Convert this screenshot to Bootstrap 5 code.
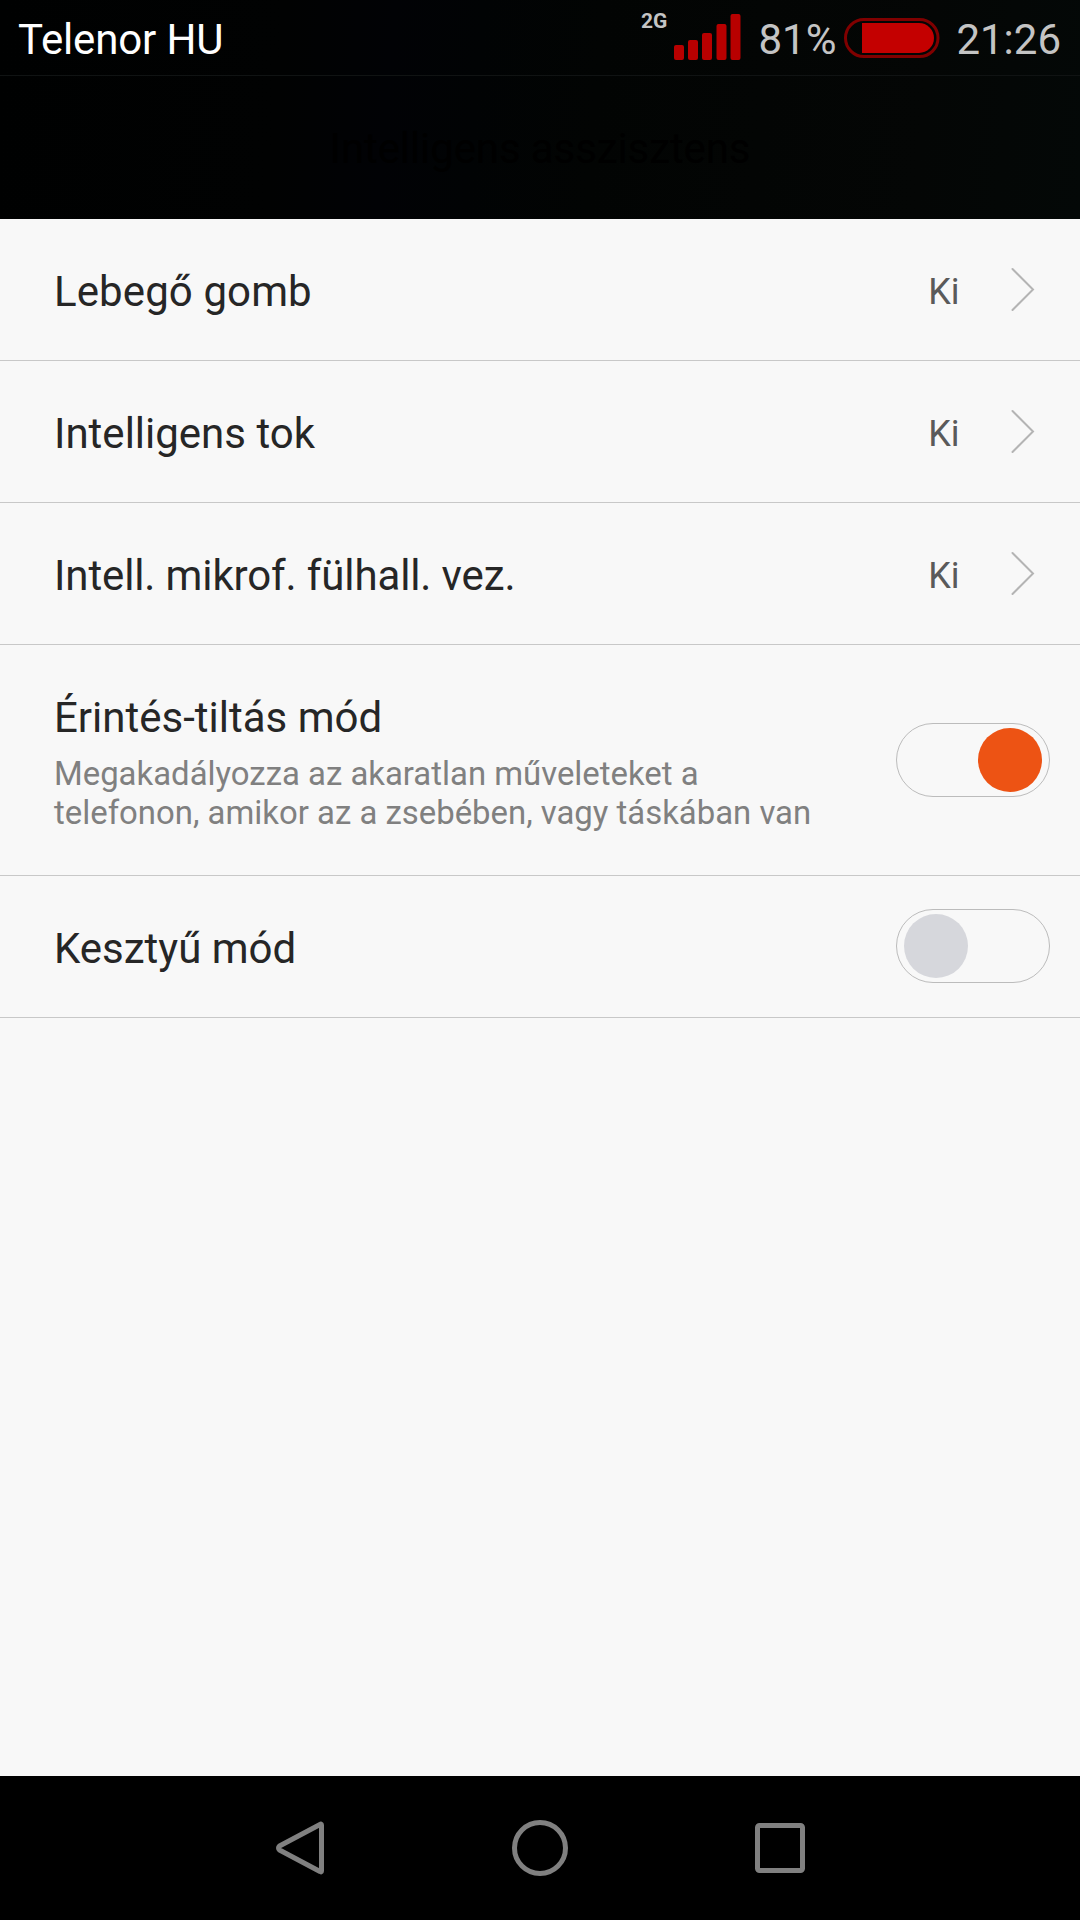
<!DOCTYPE html>
<html lang="hu">
<head>
<meta charset="utf-8">
<meta name="viewport" content="width=device-width, initial-scale=1">
<title>Intelligens asszisztens</title>
<link href="https://cdn.jsdelivr.net/npm/bootstrap@5.3.0/dist/css/bootstrap.min.css" rel="stylesheet">
<style>
  body { font-family: Roboto, "Noto Sans", sans-serif; font-size: 42px; line-height: 50px; background: #f8f8f8; color: #262626; }
  .screen { width: 1080px; height: 1920px; }
  .top-area { height: 219px; background: linear-gradient(95deg, #000101 0%, #010202 26%, #010205 36%, #010304 44%, #020403 55%, #040605 85%, #040807 100%); }
  .status-bar { height: 76px; border-bottom: 1px solid #101313; padding: 15px 19px 0 18px; color: #c4c4c4; }
  .carrier { color: #fff; letter-spacing: -.15px; }
  .net-type { font-size: 21px; line-height: 24px; font-weight: 700; margin: -6px 6px 0 0; }
  .signal { margin: -1px 17px 0 0; }
  .battery { margin: 3px 16px 0 8px; }
  .page-title { padding-top: 48px; color: #000; font-size: inherit; line-height: inherit; letter-spacing: -.1px; }
  .settings { --bs-list-group-bg: transparent; --bs-list-group-color: #262626; --bs-list-group-border-radius: 0; }
  .settings .list-group-item { height: 142px; padding: 48px 30px 0 54px; border: 0; border-bottom: 1px solid #c8c8c8; }
  .settings .tall-item { height: 231px; }
  .name-tight { letter-spacing: -.12px; }
  .name-loose { letter-spacing: .1px; }
  .state { font-size: 36px; line-height: 44px; color: #5a5a5a; margin: 3px 49.5px 0 0; }
  .chevron { margin: 0 15px 0 0; }
  .hint { font-size: 32.9px; line-height: 39px; color: #808080; margin-top: 11px; }
  .toggle { width: 154px; height: 74px; border: 1.5px solid #bcbcbc; border-radius: 37px; padding: 0 7px; margin-top: -15px; }
  .tall-item .toggle { margin-top: 30px; padding-right: 7.5px; }
  .knob { width: 64px; height: 64px; background: #d6d7dc; }
  .knob-on { background: #ed5314; }
  .nav-keys { height: 144px; background: #000; padding: 0 274px; }
</style>
<script src="https://cdn.jsdelivr.net/npm/bootstrap@5.3.0/dist/js/bootstrap.bundle.min.js"></script>
</head>
<body>
<div class="screen d-flex flex-column overflow-hidden">
  <header class="top-area flex-shrink-0">
    <div class="status-bar d-flex align-items-start">
      <span class="carrier me-auto">Telenor HU</span>
      <span class="net-type">2G</span>
      <svg class="signal" width="68" height="48" fill="#b80000">
        <rect x="1" y="31" width="10" height="15" rx="2"/><rect x="15" y="26" width="10" height="20" rx="2"/><rect x="29" y="19" width="10" height="27" rx="2"/><rect x="43.500" y="10" width="10" height="36" rx="2"/><rect x="57.500" y="0" width="10" height="46" rx="2"/>
      </svg>
      <span class="percent">81%</span>
      <svg class="battery" width="96" height="40">
        <rect x="1.500" y="1.500" width="92.500" height="37" rx="18.500" fill="none" stroke="#800000" stroke-width="3"/>
        <path d="M18 5H75a15 15 0 0 1 0 30H18Z" fill="#c40000"/>
      </svg>
      <span class="clock">21:26</span>
    </div>
    <h1 class="page-title text-center fw-normal m-0">Intelligens asszisztens</h1>
  </header>

  <main class="flex-grow-1">
    <ul class="list-group settings">
      <li class="list-group-item d-flex align-items-start"><span class="me-auto name-loose">Lebegő gomb</span><span class="state">Ki</span>
        <svg class="chevron" width="26" height="46" fill="none" stroke="#b4b4b4" stroke-width="2"><path d="M3.500 2L24 22.500L3.500 43" stroke-linecap="round"/></svg></li>
      <li class="list-group-item d-flex align-items-start"><span class="me-auto">Intelligens tok</span><span class="state">Ki</span>
        <svg class="chevron" width="26" height="46" fill="none" stroke="#b4b4b4" stroke-width="2"><path d="M3.500 2L24 22.500L3.500 43" stroke-linecap="round"/></svg></li>
      <li class="list-group-item d-flex align-items-start"><span class="me-auto name-tight">Intell. mikrof. fülhall. vez.</span><span class="state">Ki</span>
        <svg class="chevron" width="26" height="46" fill="none" stroke="#b4b4b4" stroke-width="2"><path d="M3.500 2L24 22.500L3.500 43" stroke-linecap="round"/></svg></li>
      <li class="list-group-item tall-item d-flex align-items-start">
        <div class="me-auto"><div>Érintés-tiltás mód</div><div class="hint">Megakadályozza az akaratlan műveleteket a<br>telefonon, amikor az a zsebében, vagy táskában van</div></div>
        <div class="toggle d-flex align-items-center justify-content-end"><span class="knob knob-on rounded-circle"></span></div></li>
      <li class="list-group-item d-flex align-items-start"><span class="me-auto">Kesztyű mód</span>
        <div class="toggle d-flex align-items-center"><span class="knob rounded-circle"></span></div></li>
    </ul>
  </main>

  <nav class="nav-keys d-flex align-items-center justify-content-between flex-shrink-0">
    <svg width="52" height="60" fill="none" stroke="#808080" stroke-width="5" stroke-linejoin="round"><path d="M46 6.500Q47.500 5.500 47.500 7V53Q47.500 54.500 46 53.500L5.500 32Q3.500 30 5.500 28Z"/></svg>
    <svg width="60" height="60" fill="none" stroke="#808080" stroke-width="5"><circle cx="30" cy="30" r="25.500"/></svg>
    <svg width="52" height="60" fill="none" stroke="#808080" stroke-width="5"><rect x="3.500" y="7.500" width="45" height="45" rx="2"/></svg>
  </nav>
</div>
</body>
</html>
